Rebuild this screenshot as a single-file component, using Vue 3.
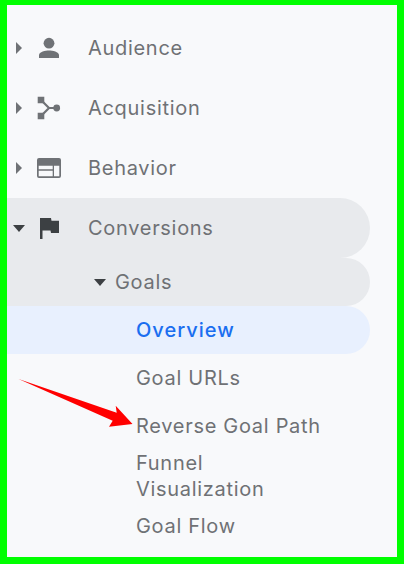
<script setup>
const topItems = [
  { label: 'Audience', icon: 'person' },
  { label: 'Acquisition', icon: 'fork' },
  { label: 'Behavior', icon: 'layout' }
]

const goalLinks = ['Goal URLs', 'Reverse Goal Path']
</script>

<template>
  <div class="frame">
    <nav class="sidebar">
      <div v-for="item in topItems" :key="item.label" class="row">
        <span class="caret-slot">
          <svg class="caret" width="6" height="12" viewBox="0 0 6 12"><path d="M0 0l6 6-6 6z" /></svg>
        </span>
        <svg v-if="item.icon === 'person'" class="icon" width="24" height="24" viewBox="0 0 24 24">
          <circle cx="12" cy="7.200" r="5.400" />
          <path d="M2 22v-3c0-3.200 6.500-4.600 10-4.600s10 1.400 10 4.600v3z" />
        </svg>
        <svg v-else-if="item.icon === 'fork'" class="icon" width="24" height="24" viewBox="0 0 24 24">
          <path d="M.7.700h6.600v6.600H.700zM.7 16.700h6.600v6.600H.700z" />
          <path class="line" d="M4 4l8 8-8 8M12 12h6" />
          <circle cx="19.700" cy="12" r="3.400" />
        </svg>
        <svg v-else class="icon" width="24" height="24" viewBox="0 0 24 24">
          <path fill-rule="evenodd" d="M2 2h20a2 2 0 0 1 2 2v16a2 2 0 0 1-2 2H2a2 2 0 0 1-2-2V4a2 2 0 0 1 2-2zM1.700 9.700v3.600h14v-3.600zm0 5v5.600h14v-5.600zm15.300-5v10.600h5.300V9.700z" />
        </svg>
        <span class="label">{{ item.label }}</span>
      </div>

      <div class="row open">
        <span class="caret-slot">
          <svg class="caret-down" width="12" height="7" viewBox="0 0 12 7"><path d="M0 0h12L6 7z" /></svg>
        </span>
        <svg class="icon flag" width="24" height="24" viewBox="0 0 24 24">
          <path d="M3 2h2.500v21H3zM5.500 2H14l.5 2.800H22V17h-8l-.5-2.500h-8z" />
        </svg>
        <span class="label">Conversions</span>
      </div>

      <div class="sub open">
        <svg class="caret-down" width="12" height="7" viewBox="0 0 12 7"><path d="M0 0h12L6 7z" /></svg>
        <span class="label">Goals</span>
      </div>

      <div class="link active">Overview</div>
      <div v-for="link in goalLinks" :key="link" class="link">{{ link }}</div>
      <div class="link wrap">Funnel<br />Visualization</div>
      <div class="link">Goal Flow</div>
    </nav>

    <!-- annotation arrow, drawn in page coordinates -->
    <svg class="arrow" width="120" height="54" viewBox="17 377 120 54">
      <path d="M18.500 379L116.700 412.700 115.700 405.700 132.500 424 109 426.700 112.700 420.700z" />
    </svg>
  </div>
</template>

<style scoped>
.frame {
  position: relative;
  width: 404px;
  height: 564px;
  box-sizing: border-box;
  border: 7px solid #00ff00;
  border-top-width: 5px;
  background: #f8f9fb;
  overflow: hidden;
  font-family: Inter, "Noto Sans", sans-serif;
  font-size: 20px;
  letter-spacing: 0.7px;
  color: #6f7175;
}

.sidebar {
  width: 363px;
  padding-top: 13px;
}

.row {
  display: flex;
  align-items: center;
  height: 60px;
}

.row.open {
  background: #e8eaed;
  border-radius: 0 30px 30px 0;
}

.caret-slot {
  display: flex;
  justify-content: center;
  width: 24px;
}

.caret {
  fill: #6f7276;
}

.caret-down {
  fill: #3c4043;
}

.icon {
  margin-left: 6px;
  fill: #6f7276;
}

.icon.flag {
  fill: #3c4043;
}

.line {
  fill: none;
  stroke: #6f7276;
  stroke-width: 2.200;
}

.row .label {
  margin-left: 27px;
}

.sub {
  display: flex;
  align-items: center;
  height: 48px;
  padding-left: 87px;
  box-sizing: border-box;
  border-radius: 0 24px 24px 0;
}

.sub.open {
  background: #e8eaed;
}

.sub .label {
  margin-left: 9px;
}

.link {
  height: 48px;
  line-height: 48px;
  padding-left: 129px;
  border-radius: 0 24px 24px 0;
}

.link.active {
  background: #e8f0fe;
  color: #1a6ef0;
  font-weight: 500;
  letter-spacing: 1px;
}

.link.wrap {
  height: 52px;
  line-height: 26px;
}

.arrow {
  position: absolute;
  left: 10px;
  top: 372px;
  fill: #ff0000;
}
</style>
